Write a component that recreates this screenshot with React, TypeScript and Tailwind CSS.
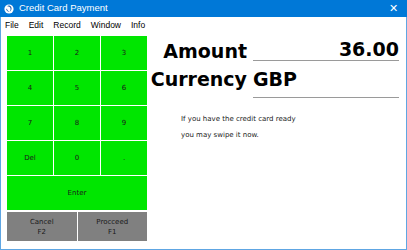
const keys = ["1", "2", "3", "4", "5", "6", "7", "8", "9", "Del", "0", "."];

function AppIcon() {
  return (
    <svg width="10" height="10" viewBox="0 0 10 10">
      <circle cx="5" cy="5" r="4.6" fill="#ffffff" />
      <path d="M3 2.2 C6.5 2 7.6 5.2 5.6 7.6 C7.8 6.8 8.4 3.4 6.2 2 C5 1.3 3.8 1.5 3 2.2 Z" fill="#1f5fa8" />
      <path d="M2.2 5.2 C2.6 6.8 4 7.8 5.4 7.6 C3.8 7 3 6 3 4.6 Z" fill="#1f5fa8" />
    </svg>
  );
}

export default function App() {
  return (
    <div className="w-[407px] h-[250px] flex flex-col bg-white font-['DejaVu_Sans',sans-serif] text-black overflow-hidden">
      {/* Title bar */}
      <div className="h-[17px] bg-[#0078d7] flex items-center pl-[4px] pr-[9px] text-white">
        <AppIcon />
        <span className="ml-[5px] text-[9.5px] font-['Liberation_Sans',sans-serif]">Credit Card Payment</span>
        <span className="ml-auto text-[11px] leading-none font-['Liberation_Sans',sans-serif]">✕</span>
      </div>

      <div className="flex-1 flex flex-col border-x border-b border-[#5ea6e3]">
        {/* Menu */}
        <div className="h-[16px] flex items-center gap-[10px] pl-[4px] text-[8.5px] font-['Liberation_Sans',sans-serif]">
          <span>File</span>
          <span>Edit</span>
          <span>Record</span>
          <span>Window</span>
          <span>Info</span>
        </div>

        <div className="flex pt-[3px]">
          {/* Keypad */}
          <div className="ml-[6px] w-[140px] flex flex-col gap-[1px] text-[7px] text-[#1a1a1a]">
            <div className="grid grid-cols-3 gap-[1px]">
              {keys.map((k) => (
                <div key={k} className="h-[34px] bg-[#00e600] flex items-center justify-center">
                  {k}
                </div>
              ))}
            </div>
            <div className="h-[34px] bg-[#00e600] flex items-center justify-center">Enter</div>
            <div className="grid grid-cols-2 gap-[1px] mt-[1px]">
              <div className="h-[29px] bg-[#808080] flex flex-col items-center justify-center leading-[10px]">
                <span>Cancel</span>
                <span>F2</span>
              </div>
              <div className="h-[29px] bg-[#808080] flex flex-col items-center justify-center leading-[10px]">
                <span>Procceed</span>
                <span>F1</span>
              </div>
            </div>
          </div>

          {/* Right panel */}
          <div className="flex-1 flex flex-col pr-[7px] pt-[1px]">
            <div className="flex items-end h-[24px]">
              <div className="w-[100px] text-right text-[19px] font-bold leading-none">Amount</div>
              <div className="ml-[6px] flex-1 border-b border-[#9a9a9a] text-right text-[19px] font-bold leading-none pb-[1px]">36.00</div>
            </div>
            <div className="flex items-start mt-[9px]">
              <div className="w-[100px] text-right text-[19px] font-bold leading-none">Currency</div>
              <div className="ml-[6px] flex-1 border-b border-[#9a9a9a] text-[19px] font-bold leading-none pb-[8px]">GBP</div>
            </div>
            <div className="mt-[13px] ml-[34px] text-[7px] leading-[16px] text-[#1a1a1a]">
              <div>If you have the credit card ready</div>
              <div>you may swipe it now.</div>
            </div>
          </div>
        </div>
      </div>
    </div>
  );
}
